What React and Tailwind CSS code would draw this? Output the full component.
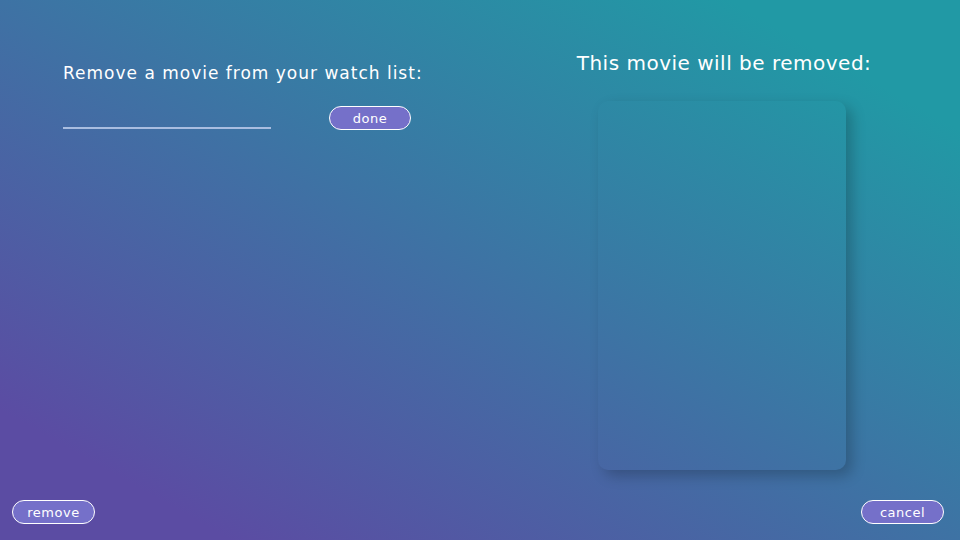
export default function App() {
  const font = { fontFamily: '"DejaVu Sans", "Noto Sans", sans-serif' };
  return (
    <div
      className="relative w-[960px] h-[540px] overflow-hidden text-white bg-[linear-gradient(to_top_right,#5b4ca3_12%,#2199a5_88%)]"
      style={font}
    >
      <div className="flex h-[488px]">
        <div className="w-[480px] pl-[63px] pt-[62px]">
          <div className="text-[17px] leading-[22px] tracking-[1px]">Remove a movie from your watch list:</div>
          <div className="flex items-end mt-[22px]">
            <div className="w-[208px] h-[2px] bg-[#a9bde0] mb-[1px]"></div>
            <button className="ml-[58px] w-[82px] h-[24px] rounded-full border border-white bg-[#7570c9] text-[13px] leading-none tracking-[0.5px]">done</button>
          </div>
        </div>
        <div className="w-[480px] flex flex-col items-center pt-[50px]">
          <div className="text-[20px] leading-[26px] tracking-[0.5px] ml-[8px]">This movie will be removed:</div>
          <div className="mt-[25px] ml-[4px] w-[248px] h-[369px] rounded-[10px] shadow-[6px_6px_14px_rgba(0,0,0,0.22)]"></div>
        </div>
      </div>
      <div className="flex justify-between px-[12px] pt-[12px]">
        <button className="w-[83px] h-[24px] rounded-full border border-white bg-[#7570c9] text-[13px] leading-none tracking-[0.5px]">remove</button>
        <button className="mr-[4px] w-[83px] h-[24px] rounded-full border border-white bg-[#7570c9] text-[13px] leading-none tracking-[0.5px]">cancel</button>
      </div>
    </div>
  );
}
